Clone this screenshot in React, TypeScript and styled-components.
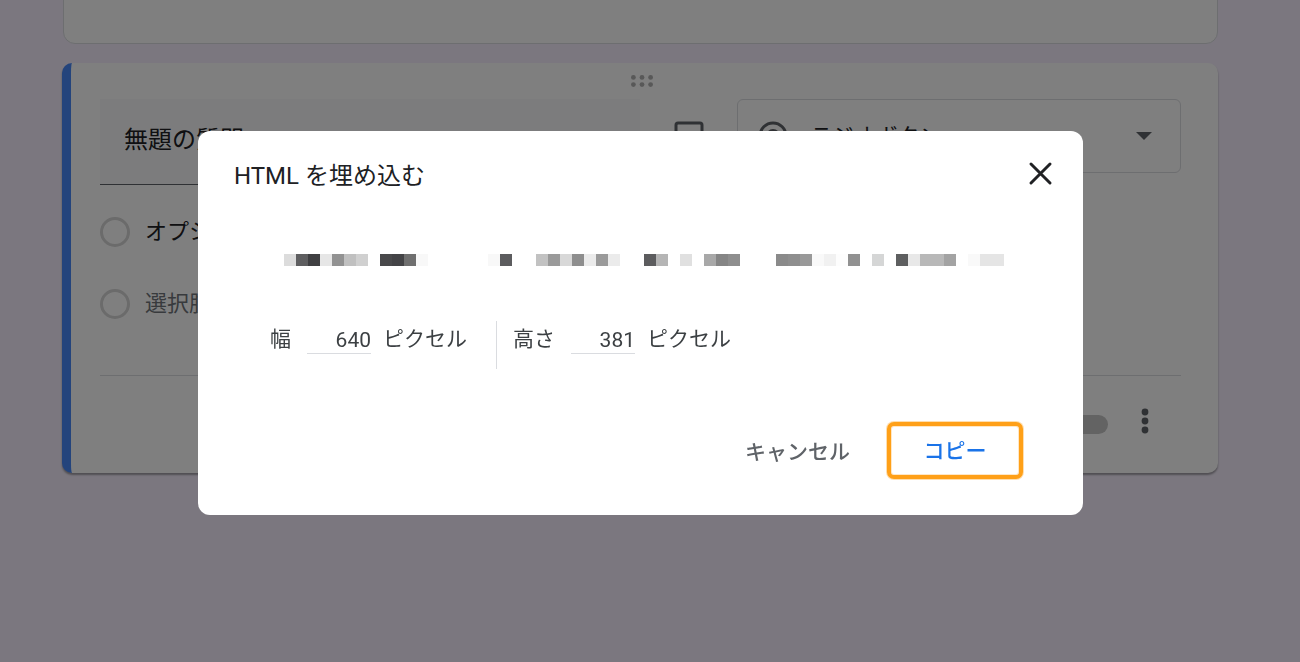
import React from "react";
import styled, { createGlobalStyle } from "styled-components";

const Global = createGlobalStyle`
  html, body { margin: 0; padding: 0; height: 100%; }
  body { background: #f6effe; font-family: Roboto, "Noto Sans CJK JP", sans-serif; color: #202124; overflow: hidden; }
`;

const Page = styled.div`
  height: 662px;
  overflow: hidden;
  padding: 0 82px 0 62px;
  box-sizing: border-box;
`;

const TopCard = styled.div`
  height: 100px;
  margin: -56px 0 19px 1px;
  background: #fff;
  border: 1px solid #dadce0;
  border-radius: 12px;
  box-sizing: border-box;
`;

const Card = styled.section`
  height: 410px;
  background: #fff;
  border-left: 9px solid #4888f8;
  border-radius: 10px;
  box-shadow: 0 2px 2px rgba(0, 0, 0, 0.35);
  box-sizing: border-box;
  padding: 12px 37px 0 29px;
`;

const Handle = styled.svg`
  display: block;
  width: 22px;
  height: 12px;
  margin: 0 auto 12px auto;
  position: relative;
  left: 1px;
  color: #b0b0b0;
`;

const Head = styled.div`
  display: flex;
  align-items: flex-start;
`;

const QuestionField = styled.div`
  width: 540px;
  height: 86px;
  background: #f8f9fa;
  border-bottom: 1px solid #5f6368;
  box-sizing: border-box;
  padding: 25px 0 0 24px;
  font-size: 24px;
  line-height: 32px;
  flex: none;
`;

const ImageIconSlot = styled.svg`
  width: 32px;
  height: 32px;
  margin: 21px 0 0 33px;
  flex: none;
  color: #5f6368;
`;

const TypeSelect = styled.div`
  width: 444px;
  height: 74px;
  margin-left: 32px;
  flex: none;
  border: 1px solid #dadce0;
  border-radius: 6px;
  box-sizing: border-box;
  display: flex;
  align-items: center;
  padding: 0 28px 0 19px;
  font-size: 22px;
`;

const SelectRadio = styled.svg`
  width: 32px;
  height: 32px;
  color: #5f6368;
  flex: none;
  margin-right: 21px;
`;

const SelectLabel = styled.span`
  flex: 1;
  padding-bottom: 4px;
`;

const Caret = styled.svg`
  width: 16px;
  height: 8px;
  color: #5f6368;
`;

const Options = styled.div`
  margin-top: 11px;
`;

const OptionRow = styled.div<{ $muted?: boolean }>`
  height: 72px;
  display: flex;
  align-items: center;
  gap: 15px;
  font-size: 22px;
  color: ${(p) => (p.$muted ? "#70757a" : "#202124")};
`;

const OptionText = styled.span`
  padding-bottom: 6px;
`;

const Ring = styled.span`
  width: 30px;
  height: 30px;
  box-sizing: border-box;
  border: 3px solid #d6d6d6;
  border-radius: 50%;
  flex: none;
`;

const Divider = styled.div`
  height: 1px;
  background: #dadce0;
  margin-top: 35px;
`;

const Footer = styled.div`
  display: flex;
  justify-content: flex-end;
  align-items: center;
  height: 78px;
  padding-top: 18px;
  box-sizing: border-box;
`;

const Toggle = styled.span`
  width: 48px;
  height: 19px;
  border-radius: 10px;
  background: #c6c6c6;
`;

const MoreDots = styled.svg`
  width: 8px;
  height: 26px;
  margin: -6px 32px 0 33px;
  color: #5f6368;
`;

const Overlay = styled.div`
  position: fixed;
  inset: 0;
  background: rgba(0, 0, 0, 0.5);
  padding: 131px 217px 147px 198px;
  box-sizing: border-box;
  display: flex;
`;

const Dialog = styled.div`
  flex: 1;
  background: #fff;
  border-radius: 12px;
  display: flex;
  flex-direction: column;
`;

const DialogHead = styled.div`
  display: flex;
  align-items: center;
  justify-content: space-between;
  padding: 27px 29px 0 36px;
`;

const Title = styled.h2`
  margin: 0;
  font-size: 24px;
  font-weight: 400;
  line-height: 36px;
`;

const CloseButton = styled.button`
  border: 0;
  background: none;
  padding: 0;
  margin-top: -6px;
  display: flex;
  color: #202124;
`;

const Mosaic = styled.div`
  display: flex;
  margin: 60px 0 0 86px;
`;

const Cell = styled.span<{ $c: string }>`
  width: 12px;
  height: 12px;
  background: ${(p) => p.$c};
`;

const SizeRow = styled.div`
  display: flex;
  align-items: flex-start;
  margin: 55px 0 0 72px;
`;

const SizeGroup = styled.div<{ $first?: boolean }>`
  height: 48px;
  display: flex;
  align-items: flex-start;
  font-size: 21px;
  line-height: 36px;
  color: #3c4043;
  ${(p) => (p.$first ? "border-right: 1px solid #dadce0; padding-right: 29px;" : "padding-left: 16px;")}
`;

const SizeLabel = styled.span`
  margin-right: 16px;
`;

const SizeValue = styled.span`
  width: 64px;
  height: 33px;
  box-sizing: border-box;
  border-bottom: 1px solid #dadce0;
  text-align: right;
  padding-top: 1px;
  margin-right: 12px;
`;

const Actions = styled.div`
  display: flex;
  align-items: center;
  justify-content: flex-end;
  margin: 53px 60px 0 0;
  gap: 37px;
`;

const Cancel = styled.button`
  border: 0;
  background: none;
  padding: 0 0 2px;
  font: inherit;
  font-size: 21px;
  font-weight: 500;
  color: #5f6368;
`;

const Copy = styled.button`
  width: 136px;
  height: 57px;
  box-sizing: border-box;
  background: #fff;
  border: 4px solid #ffa018;
  border-radius: 7px;
  box-shadow: 0 0 0 1px rgba(255, 160, 24, 0.35), inset 0 0 0 1px rgba(255, 160, 24, 0.25);
  font: inherit;
  font-size: 21px;
  font-weight: 500;
  color: #1a73e8;
  padding: 0 0 4px;
`;

const pixels = [
  "dcdcdc", "5e5e60", "3f3f42", "e6e6e6", "929292", "c0c0c0", "d0d0d0", "ffffff", "49494b", "434346",
  "6f6f6f", "f8f8f8", "ffffff", "ffffff", "ffffff", "ffffff", "ffffff", "f8f8f8", "5c5c5e", "ffffff",
  "ffffff", "c2c2c2", "9a9a9a", "d8d8d8", "8e8e8e", "ebebeb", "9a9a9a", "ebebeb", "ffffff", "ffffff",
  "5c5c5e", "b5b5b5", "ffffff", "e0e0e0", "ffffff", "a8a8a8", "858585", "8e8e8e", "ffffff", "ffffff",
  "ffffff", "8a8a8a", "8e8e8e", "999999", "f9f9f9", "f1f1f1", "fdfdfd", "919191", "ffffff", "d5d6d6",
  "ffffff", "5e5f60", "e8e8e8", "b8b8b8", "b8b8b8", "a3a3a3", "ffffff", "f9f9f9", "e5e5e5", "e5e5e5",
];

export default function App() {
  return (
    <>
      <Global />
      <Page>
        <TopCard />
        <Card>
          <Handle viewBox="0 0 22 12" fill="currentColor">
            {[2.4, 11, 19.6].map((x) => (
              <React.Fragment key={x}>
                <circle cx={x} cy={2.4} r={2.4} />
                <circle cx={x} cy={9.6} r={2.4} />
              </React.Fragment>
            ))}
          </Handle>
          <Head>
            <QuestionField>無題の質問</QuestionField>
            <ImageIconSlot viewBox="0 0 32 32" fill="none" stroke="currentColor" strokeWidth="3">
              <rect x="3" y="3" width="26" height="26" rx="2" />
            </ImageIconSlot>
            <TypeSelect>
              <SelectRadio viewBox="0 0 32 32" fill="none">
                <circle cx="16" cy="16" r="13" stroke="currentColor" strokeWidth="3" />
                <circle cx="16" cy="16" r="7" fill="currentColor" />
              </SelectRadio>
              <SelectLabel>ラジオボタン</SelectLabel>
              <Caret viewBox="0 0 16 8" fill="currentColor">
                <path d="M0 0h16L8 8z" />
              </Caret>
            </TypeSelect>
          </Head>
          <Options>
            <OptionRow>
              <Ring />
              <OptionText>オプション 1</OptionText>
            </OptionRow>
            <OptionRow $muted>
              <Ring />
              <OptionText>選択肢を追加</OptionText>
            </OptionRow>
          </Options>
          <Divider />
          <Footer>
            <Toggle />
            <MoreDots viewBox="0 0 8 26" fill="currentColor">
              <circle cx="4" cy="4" r="3.4" />
              <circle cx="4" cy="13" r="3.4" />
              <circle cx="4" cy="22" r="3.4" />
            </MoreDots>
          </Footer>
        </Card>
      </Page>
      <Overlay>
        <Dialog>
          <DialogHead>
            <Title>HTML を埋め込む</Title>
            <CloseButton aria-label="閉じる">
              <svg width="28" height="28" viewBox="0 0 28 28" fill="none" stroke="currentColor" strokeWidth="3" strokeLinecap="round">
                <path d="M5 5l19 19M24 5L5 24" />
              </svg>
            </CloseButton>
          </DialogHead>
          <Mosaic>
            {pixels.map((c, i) => (
              <Cell key={i} $c={`#${c}`} />
            ))}
          </Mosaic>
          <SizeRow>
            <SizeGroup $first>
              <SizeLabel>幅</SizeLabel>
              <SizeValue>640</SizeValue>
              ピクセル
            </SizeGroup>
            <SizeGroup>
              <SizeLabel>高さ</SizeLabel>
              <SizeValue>381</SizeValue>
              ピクセル
            </SizeGroup>
          </SizeRow>
          <Actions>
            <Cancel>キャンセル</Cancel>
            <Copy>コピー</Copy>
          </Actions>
        </Dialog>
      </Overlay>
    </>
  );
}
